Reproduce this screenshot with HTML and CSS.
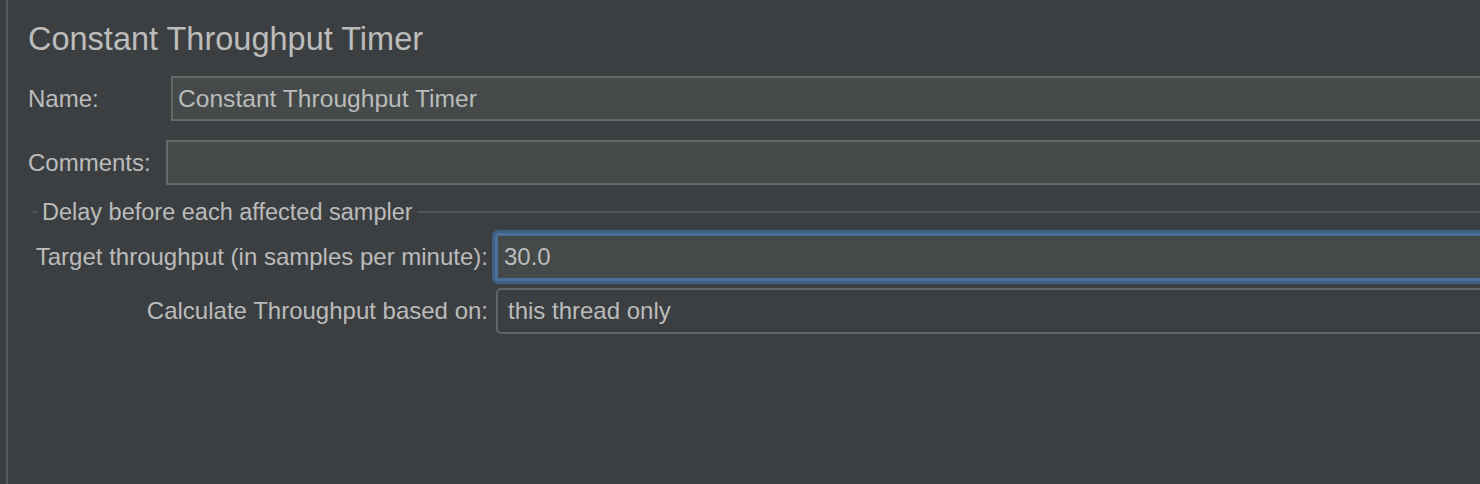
FILE: index.html
```html
<!DOCTYPE html>
<html>
<head>
<meta charset="utf-8">
<link rel="stylesheet" href="styles.css">
</head>
<body>
<div class="panel">
  <div class="title">Constant Throughput Timer</div>
  <div class="row row-name">
    <div class="label label-name">Name:</div>
    <div class="field">Constant Throughput Timer</div>
  </div>
  <div class="row row-comments">
    <div class="label label-comments">Comments:</div>
    <div class="field"></div>
  </div>
  <div class="group">
    <div class="group-head">
      <span class="line line-left"></span>
      <span class="group-title">Delay before each affected sampler</span>
      <span class="line line-right"></span>
    </div>
    <div class="grid">
      <div class="glabel">Target throughput (in samples per minute):</div>
      <div class="focus-field">30.0</div>
      <div class="glabel">Calculate Throughput based on:</div>
      <div class="combo">this thread only</div>
    </div>
  </div>
</div>
</body>
</html>
```
FILE: styles.css
```css
html, body {
  margin: 0;
  padding: 0;
  background: #3c3f41;
  width: 1480px;
  height: 484px;
  overflow: hidden;
}
body {
  font-family: "Liberation Sans", Arial, sans-serif;
  color: #bbbbbb;
}
.panel {
  margin-left: 6px;
  border-left: 2px solid #555758;
  height: 484px;
  padding-left: 20px;
  box-sizing: border-box;
  overflow: hidden;
}
.title {
  font-size: 32.5px;
  line-height: 40px;
  padding-top: 19px;
  height: 57px;
  box-sizing: border-box;
  color: #bcbcbc;
}
.row {
  display: flex;
  align-items: center;
  font-size: 24px;
}
.row-name {
  margin-top: 19px;
}
.row-comments {
  margin-top: 19px;
}
.label-name {
  width: 143px;
  flex: none;
}
.label-comments {
  width: 138px;
  flex: none;
}
.field {
  flex: none;
  width: 1400px;
  height: 45px;
  box-sizing: border-box;
  border: 2px solid #666767;
  background: #45494a;
  padding-left: 5px;
  line-height: 41px;
  font-size: 24.6px;
  color: #bbbbbb;
}
.group {
  margin-top: 14px;
}
.group-head {
  display: flex;
  align-items: center;
  font-size: 23.5px;
  height: 26px;
  margin-left: 4px;
}
.line {
  height: 2px;
  background: #515355;
  flex: none;
}
.line-left {
  width: 6px;
  margin-right: 4px;
}
.line-right {
  flex: 1;
  margin-left: 4px;
}
.group-title {
  white-space: nowrap;
}
.grid {
  display: grid;
  grid-template-columns: 460px 1fr;
  grid-template-rows: 54px 46px;
  row-gap: 4px;
  margin-top: 5px;
  margin-left: 4px;
  font-size: 24px;
  align-items: center;
}
.glabel {
  text-align: right;
  white-space: nowrap;
  padding-right: 4px;
}
.focus-field {
  width: 1100px;
  height: 48px;
  box-sizing: border-box;
  margin-left: 3px;
  border: 3px solid #4a7099;
  border-radius: 3px;
  box-shadow: 0 0 0 3px #3d6085;
  background: #45494a;
  padding-left: 6px;
  line-height: 42px;
}
.combo {
  width: 1100px;
  height: 46px;
  box-sizing: border-box;
  margin-left: 4px;
  border: 2px solid #646566;
  border-radius: 5px;
  background: #3c3f41;
  padding-left: 10px;
  line-height: 42px;
}
```
